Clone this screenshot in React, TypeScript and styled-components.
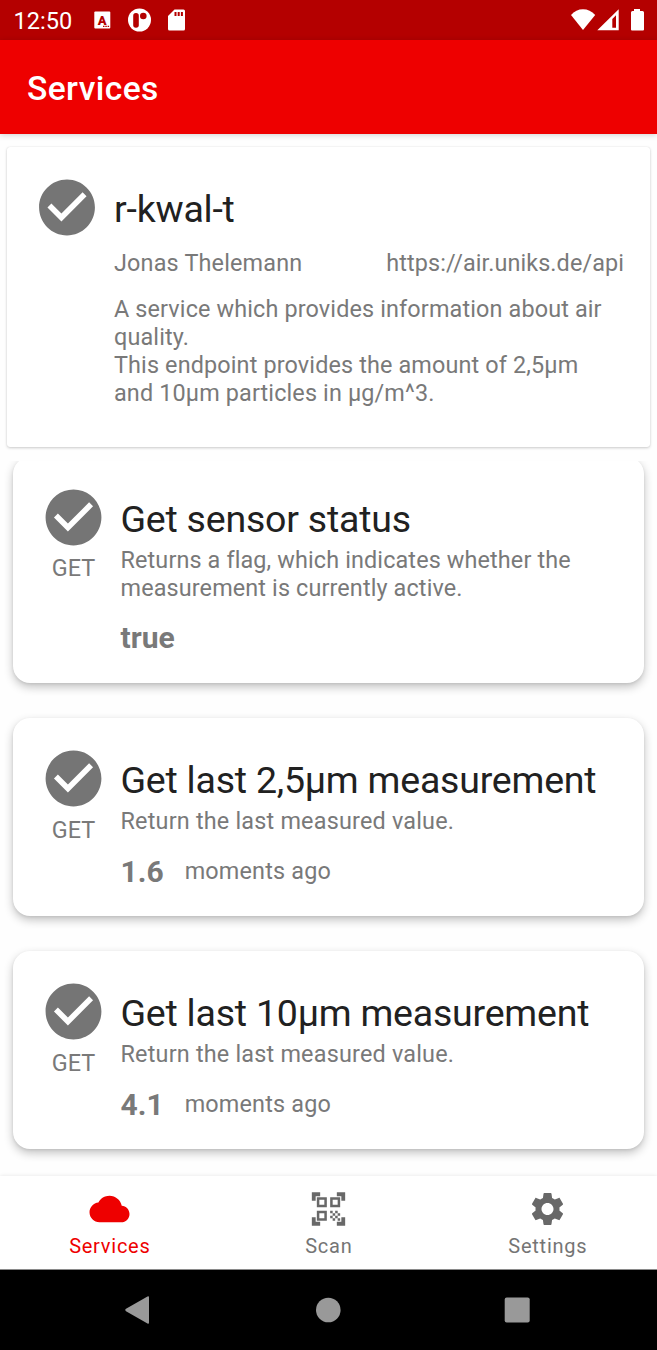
import React from "react";
import styled, { createGlobalStyle } from "styled-components";

const GlobalStyle = createGlobalStyle`
  * { box-sizing: border-box; }
  body { margin: 0; background: #fefefe; font-family: Roboto, sans-serif; color: #797979; }
`;

const Screen = styled.div`
  width: 657px;
  height: 1350px;
  display: flex;
  flex-direction: column;
  overflow: hidden;
`;

const StatusBar = styled.div`
  height: 40px;
  flex: none;
  background: #b40000;
  color: #fff;
  display: flex;
  align-items: center;
  justify-content: space-between;
  padding: 0 12px 0 13.5px;
  svg { display: block; }
`;
const StatusGroup = styled.div<{ $gap: number }>`
  display: flex;
  align-items: center;
  gap: ${(p) => p.$gap}px;
`;
const Clock = styled.span`
  font-size: 23.6px;
  line-height: 28px;
  width: 64.5px;
  padding-top: 2px;
`;

const AppBar = styled.header`
  height: 93.5px;
  flex: none;
  background: #ee0000;
  color: #fff;
  display: flex;
  align-items: center;
  padding: 4.5px 27px 0;
  box-shadow: 0 1px 6px rgba(0, 0, 0, 0.18);
`;
const AppTitle = styled.h1`
  margin: 0;
  font-size: 33.6px;
  font-weight: 500;
  line-height: 40px;
  letter-spacing: 0.4px;
`;

const ServiceCard = styled.section`
  flex: none;
  height: 300px;
  margin: 13.5px 7px 0;
  padding: 27px 26px 0 26px;
  background: #fff;
  border-radius: 3px;
  box-shadow: 0 1px 3px rgba(0, 0, 0, 0.2), 0 0 1px rgba(0, 0, 0, 0.12);
  display: flex;
  gap: 13px;
`;

const List = styled.main`
  flex: 1;
  min-height: 0;
  margin-top: 14px;
  overflow: hidden;
  display: flex;
  flex-direction: column;
  gap: 35.2px;
  padding: 0 13.5px 0 13px;
`;
const ActionCard = styled.article<{ $scrolled?: boolean }>`
  flex: none;
  margin-top: ${(p) => (p.$scrolled ? "-4.4px" : "0")};
  padding: 27.3px 26px 26.3px 27px;
  background: #fff;
  border-radius: 17px;
  box-shadow: 0 4px 10px rgba(0, 0, 0, 0.24), 0 1px 3px rgba(0, 0, 0, 0.08);
  display: flex;
  gap: 13.5px;
`;

const IconColumn = styled.div<{ $width: number }>`
  width: ${(p) => p.$width}px;
  flex: none;
  display: flex;
  flex-direction: column;
  align-items: center;
  svg { display: block; width: 100%; }
`;
const Method = styled.span`
  margin-top: 3.5px;
  font-size: 23.4px;
  line-height: 28px;
`;
const Body = styled.div`
  flex: 1;
  min-width: 0;
  padding-top: 12px;
`;
const Title = styled.h2`
  margin: 0;
  font-size: 37.5px;
  font-weight: 400;
  line-height: 46px;
  letter-spacing: -0.22px;
  color: #212121;
  white-space: nowrap;
`;
const Text = styled.p<{ $top?: number; $spacing?: number }>`
  margin: ${(p) => p.$top ?? 0}px 0 0;
  font-size: 23.4px;
  line-height: 27.9px;
  letter-spacing: ${(p) => p.$spacing ?? 0.18}px;
  white-space: pre-line;
`;
const Description = styled(Text)`
  padding-right: 8px;
`;
const MetaRow = styled.div`
  display: flex;
  justify-content: space-between;
  margin-top: 18px;
  white-space: nowrap;
`;
const ResultRow = styled.div`
  display: flex;
  align-items: center;
  gap: 21px;
  height: 36px;
  margin-top: 17.8px;
`;
const Value = styled.strong`
  font-size: 30px;
  font-weight: 700;
  line-height: 36px;
`;

const BottomNav = styled.nav`
  height: 94px;
  flex: none;
  background: #fff;
  border-bottom: 1px solid #8a8a8a;
  box-shadow: 0 0 4px rgba(0, 0, 0, 0.1);
  display: flex;
  z-index: 1;
`;
const Tab = styled.div<{ $active?: boolean }>`
  flex: 1;
  display: flex;
  flex-direction: column;
  align-items: center;
  padding-top: 13px;
  font-size: 20px;
  line-height: 24px;
  letter-spacing: 0.75px;
  color: ${(p) => (p.$active ? "#ee0000" : "#757575")};
  svg { display: block; fill: ${(p) => (p.$active ? "#ee0000" : "#686868")}; }
  span { margin-top: 5px; padding-left: 0.7px; }
`;

const SystemNav = styled.div`
  height: 80px;
  flex: none;
  background: #000;
  display: flex;
  align-items: center;
  justify-content: space-between;
  padding: 0 127px 0 125px;
  svg { display: block; fill: #999; }
`;

const CheckCircle = () => (
  <svg height="67" viewBox="0 0 24 24" fill="#757575">
    <path d="M12 2C6.48 2 2 6.48 2 12s4.48 10 10 10 10-4.48 10-10S17.52 2 12 2zm-2 15l-5-5 1.41-1.41L10 14.17l7.59-7.59L19 8l-9 9z" />
  </svg>
);

const actions = [
  {
    title: "Get sensor status",
    text: "Returns a flag, which indicates whether the measurement is currently active.",
    spacing: 0.13,
    value: "true",
    age: "",
  },
  { title: "Get last 2,5µm measurement", text: "Return the last measured value.", spacing: 0.2, value: "1.6", age: "moments ago" },
  { title: "Get last 10µm measurement", text: "Return the last measured value.", spacing: 0.2, value: "4.1", age: "moments ago" },
];

const tabs = [
  {
    label: "Services",
    path: "M19.35 10.04C18.67 6.59 15.64 4 12 4 9.11 4 6.6 5.64 5.35 8.04 2.34 8.36 0 10.91 0 14c0 3.31 2.69 6 6 6h13c2.76 0 5-2.24 5-5 0-2.64-2.05-4.78-4.65-4.96z",
  },
  {
    label: "Scan",
    path: "M9.5 6.5v3h-3v-3h3M11 5H5v6h6V5zM9.5 14.5v3h-3v-3h3M11 13H5v6h6v-6zM17.5 6.5v3h-3v-3h3M19 5h-6v6h6V5zM13 13h1.5v1.5H13zM14.5 14.5H16V16h-1.5zM16 13h1.5v1.5H16zM13 16h1.5v1.5H13zM14.5 17.5H16V19h-1.5zM16 16h1.5v1.5H16zM17.5 14.5H19V16h-1.5zM17.5 17.5H19V19h-1.5zM22 7h-2.300V4.300H17V2h5zM22 22v-5h-2.300v2.700H17V22zM2 22h5v-2.300H4.300V17H2zM2 2v5h2.300V4.300H7V2z",
  },
  {
    label: "Settings",
    path: "M19.14 12.94c.04-.3.06-.61.06-.94 0-.32-.02-.64-.07-.94l2.03-1.58c.18-.14.23-.41.12-.61l-1.92-3.32c-.12-.22-.37-.29-.59-.22l-2.39.96c-.5-.38-1.03-.7-1.62-.94l-.36-2.54c-.04-.24-.24-.41-.48-.41h-3.84c-.24 0-.43.17-.47.41l-.36 2.54c-.59.24-1.13.57-1.62.94l-2.39-.96c-.22-.08-.47 0-.59.22L2.74 8.87c-.12.21-.08.47.12.61l2.03 1.58c-.05.3-.09.63-.09.94s.02.64.07.94l-2.03 1.58c-.18.14-.23.41-.12.61l1.92 3.32c.12.22.37.29.59.22l2.39-.96c.5.38 1.03.7 1.62.94l.36 2.54c.05.24.24.41.48.41h3.84c.24 0 .44-.17.47-.41l.36-2.54c.59-.24 1.13-.56 1.62-.94l2.39.96c.22.08.47 0 .59-.22l1.92-3.32c.12-.22.07-.47-.12-.61l-2.01-1.58zM12 15.6c-1.98 0-3.6-1.62-3.6-3.6s1.62-3.6 3.6-3.6 3.6 1.62 3.6 3.6-1.62 3.6-3.6 3.6z",
  },
];

export default function App() {
  return (
    <Screen>
      <GlobalStyle />
      <StatusBar>
        <StatusGroup $gap={16}>
          <Clock>12:50</Clock>
          <svg width="17" height="18" viewBox="0 0 17 18">
            <rect x=".3" y=".5" width="16" height="17" rx="1" fill="#fff" />
            <text x="8.300" y="13.500" fontSize="13" fontWeight="900" textAnchor="middle" fill="#b40000">A</text>
            <path d="M9 14.700h1.500V16H9zM11.300 14.700h1.500V16h-1.500zM13.600 14.700h1.500V16h-1.500z" fill="#b40000" />
          </svg>
          <svg width="25" height="24" viewBox="0 0 25 24">
            <circle cx="12.5" cy="12" r="11.5" fill="#fff" />
            <rect x="6.2" y="5" width="5.6" height="14.700" rx="2.7" fill="#b40000" />
            <circle cx="16.300" cy="8" r="3.3" fill="#b40000" />
          </svg>
          <svg width="17" height="22" viewBox="0 0 17 22">
            <path d="M6.5.5H15.500a1.500 1.500 0 0 1 1.500 1.500V20a1.500 1.500 0 0 1-1.500 1.500h-14A1.500 1.500 0 0 1 0 20V7z" fill="#fff" />
            <path d="M6.500 3h2v4h-2zM9.700 3h2v4h-2zM12.900 3h2v4h-2z" fill="#b40000" />
          </svg>
        </StatusGroup>
        <svg width="74" height="24" viewBox="0 0 74 24" fill="#fff">
          <path d="M12 22L0 7Q5 1.300 12 1.300T24.200 7z" />
          <path fillRule="evenodd" d="M26.300 22.300L47.700 1.300v21zM41.300 11v8.800H45V7.300z" />
          <path d="M63 1h6v2h2.500q1.500 0 1.500 1.500v17q0 1-1 1H61q-1 0-1-1v-17Q60 3 61.500 3H63z" />
        </svg>
      </StatusBar>
      <AppBar>
        <AppTitle>Services</AppTitle>
      </AppBar>
      <ServiceCard>
        <IconColumn $width={68}><CheckCircle /></IconColumn>
        <Body>
          <Title>r-kwal-t</Title>
          <MetaRow>
            <Text>Jonas Thelemann</Text>
            <Text $spacing={0.1}>https://air.uniks.de/api</Text>
          </MetaRow>
          <Description $top={18} $spacing={0.14}>
            {"A service which provides information about air quality.\nThis endpoint provides the amount of 2,5µm and 10µm particles in µg/m^3."}
          </Description>
        </Body>
      </ServiceCard>
      <List>
        {actions.map((a, i) => (
          <ActionCard key={a.title} $scrolled={i === 0}>
            <IconColumn $width={67}>
              <CheckCircle />
              <Method>GET</Method>
            </IconColumn>
            <Body>
              <Title>{a.title}</Title>
              <Text $top={4.8} $spacing={a.spacing}>{a.text}</Text>
              <ResultRow>
                <Value>{a.value}</Value>
                {a.age && <Text>{a.age}</Text>}
              </ResultRow>
            </Body>
          </ActionCard>
        ))}
      </List>
      <BottomNav>
        {tabs.map((t, i) => (
          <Tab key={t.label} $active={i === 0}>
            <svg width="41" height="40" viewBox="0 0 24 24"><path d={t.path} /></svg>
            <span>{t.label}</span>
          </Tab>
        ))}
      </BottomNav>
      <SystemNav>
        <svg width="25" height="28" viewBox="0 0 25 28"><path d="M1 12.800L22.500.500q1.500-.700 1.500 1v25q0 1.700-1.500 1L1 15.200q-1.500-1.200 0-2.400z" /></svg>
        <svg width="28" height="26" viewBox="0 0 28 26"><circle cx="15.300" cy="13" r="12.300" /></svg>
        <svg width="26" height="26" viewBox="0 0 26 26"><rect x=".7" y=".5" width="25" height="25" rx="2" /></svg>
      </SystemNav>
    </Screen>
  );
}
